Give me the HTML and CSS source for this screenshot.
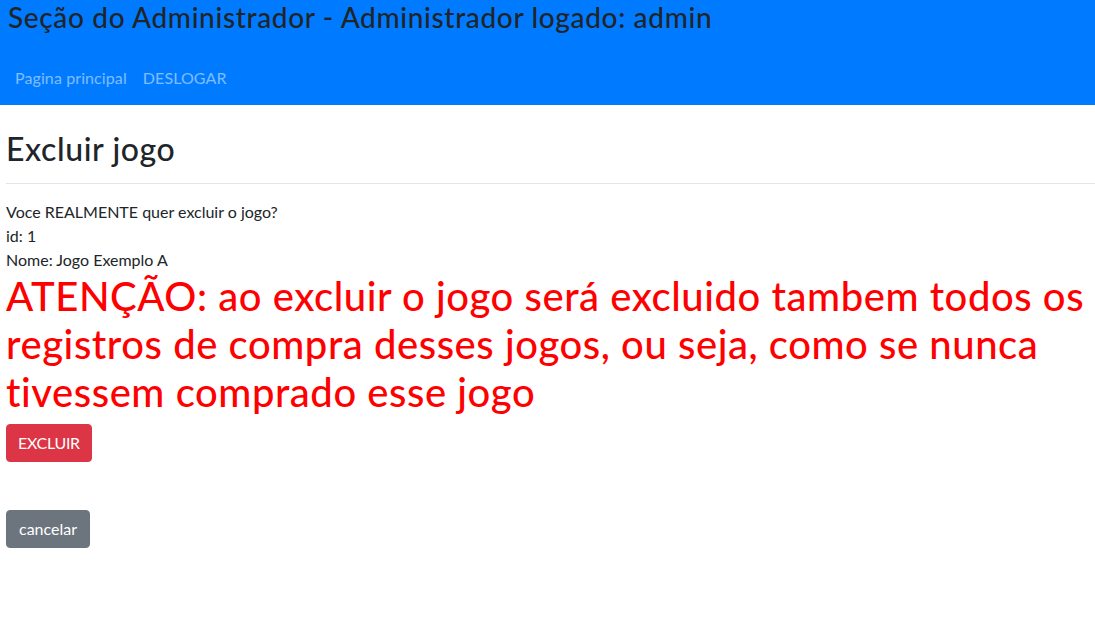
FILE: index.html
```html
<!DOCTYPE html>
<html lang="pt">
<head>
<meta charset="utf-8">
<title>Excluir jogo</title>
<link rel="stylesheet" href="styles.css">
</head>
<body>
<header class="topbar">
  <h3 class="topbar-title">Seção do Administrador - Administrador logado: admin</h3>
  <nav class="topnav">
    <a class="topnav-link" href="#">Pagina principal</a>
    <a class="topnav-link" href="#">DESLOGAR</a>
  </nav>
</header>
<main class="content">
  <h2 class="page-title">Excluir jogo</h2>
  <hr class="divider">
  <div class="info">
    <div>Voce REALMENTE quer excluir o jogo?</div>
    <div>id: 1</div>
    <div>Nome: Jogo Exemplo A</div>
  </div>
  <h1 class="warning">ATENÇÃO: ao excluir o jogo será excluido tambem todos os registros de compra desses jogos, ou seja, como se nunca tivessem comprado esse jogo</h1>
  <form class="form-delete">
    <button type="button" class="btn btn-danger">EXCLUIR</button>
  </form>
  <button type="button" class="btn btn-secondary">cancelar</button>
</main>
</body>
</html>
```
FILE: styles.css
```css
* { box-sizing: border-box; }
html, body { margin: 0; padding: 0; }
body {
  font-family: "Lato", "Open Sans", "Noto Sans", sans-serif;
  font-size: 16px;
  line-height: 1.5;
  color: #212529;
  background: #fff;
}
.topbar {
  background: #007bff;
  height: 105px;
}
.topbar-title {
  margin: 0 0 16px 0;
  padding: 1px 0 0 8px;
  font-size: 28px;
  font-weight: 500;
  line-height: 1.2;
  letter-spacing: 0.65px;
  color: #212529;
}
.topnav {
  display: flex;
  padding: 7px 0 0 7px;
}
.topnav-link {
  display: block;
  padding: 8px;
  color: rgba(255,255,255,0.5);
  text-decoration: none;
  line-height: 24px;
  letter-spacing: 0.1px;
}
.content {
  padding: 25px 0 0 6px;
}
.page-title {
  margin: 0 0 8px 0;
  font-size: 32px;
  font-weight: 500;
  line-height: 1.2;
  letter-spacing: 0.6px;
}
.divider {
  margin: 15px 0 16px 0;
  border: 0;
  border-top: 1px solid rgba(0,0,0,0.1);
}
.info { line-height: 24px; }
.warning {
  margin: 0 0 8px 0;
  font-size: 40px;
  font-weight: 500;
  line-height: 1.2;
  letter-spacing: 0.55px;
  color: #ff0000;
}
.form-delete { margin: 0 0 48px 0; }
.btn {
  display: inline-block;
  font-family: inherit;
  font-size: 16px;
  line-height: 24px;
  padding: 6px 12px;
  border: 1px solid transparent;
  border-radius: 4px;
  color: #fff;
  cursor: pointer;
}
.btn-danger { background: #dc3545; border-color: #dc3545; padding: 6px 11px; letter-spacing: -0.3px; }
.btn-secondary { background: #6c757d; border-color: #6c757d; }
```
